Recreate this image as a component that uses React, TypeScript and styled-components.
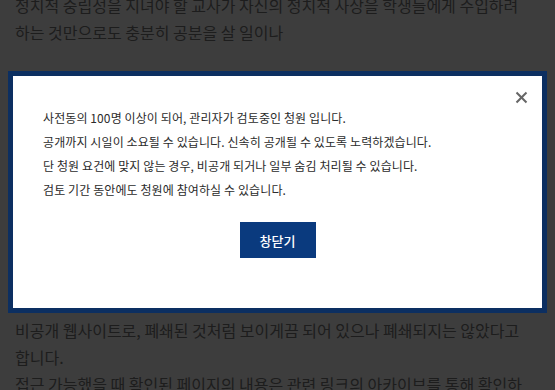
import React from 'react'
import styled, { createGlobalStyle } from 'styled-components'

const GlobalStyle = createGlobalStyle`
  html, body {
    margin: 0;
    padding: 0;
    overflow: hidden;
    background: #fff;
  }
  body {
    font-family: "Noto Sans CJK KR", "Noto Sans", sans-serif;
  }
`

const Article = styled.article`
  margin-top: -8px;
  padding: 0 22px 0 15px;
  color: #7a7a7a;
  font-size: 16px;
  line-height: 27px;
`

const Paragraph = styled.p`
  margin: 0 0 ${(p: { $gap?: number }) => p.$gap ?? 0}px;
`

const Figure = styled.figure`
  margin: 0 0 27px;
  height: 217px;
  background: #ddd;
`

const Overlay = styled.div`
  position: fixed;
  inset: 0;
  background: rgba(0, 0, 0, 0.76);
`

const Modal = styled.div`
  position: fixed;
  top: 71px;
  left: 8px;
  right: 8px;
  box-sizing: border-box;
  border: 5px solid #0c2f61;
  background: #fff;
  padding: 30px 30px 50px;
`

const CloseButton = styled.button`
  position: absolute;
  top: 13px;
  right: 13px;
  width: 16px;
  height: 16px;
  padding: 0;
  border: 0;
  background: none;
  display: flex;
  align-items: center;
  justify-content: center;
  cursor: pointer;
`

const Message = styled.div`
  color: #2b2b2b;
  font-size: 12px;
  line-height: 24px;
  letter-spacing: 0.1px;
  word-break: keep-all;
`

const Footer = styled.div`
  display: flex;
  justify-content: center;
  margin-top: 20px;
`

const ConfirmButton = styled.button`
  width: 76px;
  height: 36px;
  border: 0;
  background: #0a3a7e;
  color: #fff;
  font-family: "Noto Sans CJK KR", sans-serif;
  font-size: 13px;
  font-weight: 500;
  cursor: pointer;
`

const messages = [
  '사전동의 100명 이상이 되어, 관리자가 검토중인 청원 입니다.',
  '공개까지 시일이 소요될 수 있습니다. 신속히 공개될 수 있도록 노력하겠습니다.',
  '단 청원 요건에 맞지 않는 경우, 비공개 되거나 일부 숨김 처리될 수 있습니다.',
  '검토 기간 동안에도 청원에 참여하실 수 있습니다.',
]

const App = () => {
  return (
    <>
      <GlobalStyle />
      <Article>
        <Paragraph $gap={27}>
          정치적 중립성을 지녀야 할 교사가 자신의 정치적 사상을 학생들에게 주입하려
          하는 것만으로도 충분히 공분을 살 일이나
        </Paragraph>
        <Figure />
        <Paragraph>
          비공개 웹사이트로, 폐쇄된 것처럼 보이게끔 되어 있으나 폐쇄되지는 않았다고 합니다.
        </Paragraph>
        <Paragraph>
          접근 가능했을 때 확인된 페이지의 내용은 관련 링크의 아카이브를 통해 확인하실 수 있습니다.
        </Paragraph>
      </Article>
      <Overlay />
      <Modal>
        <CloseButton aria-label="닫기">
          <svg width="13" height="13" viewBox="0 0 13 13">
            <path d="M1.5 1.5 L11.5 11.5 M11.5 1.5 L1.5 11.5" stroke="#666" strokeWidth="2" />
          </svg>
        </CloseButton>
        <Message>
          {messages.map((text) => (
            <div key={text}>{text}</div>
          ))}
        </Message>
        <Footer>
          <ConfirmButton>창닫기</ConfirmButton>
        </Footer>
      </Modal>
    </>
  )
}

export default App
